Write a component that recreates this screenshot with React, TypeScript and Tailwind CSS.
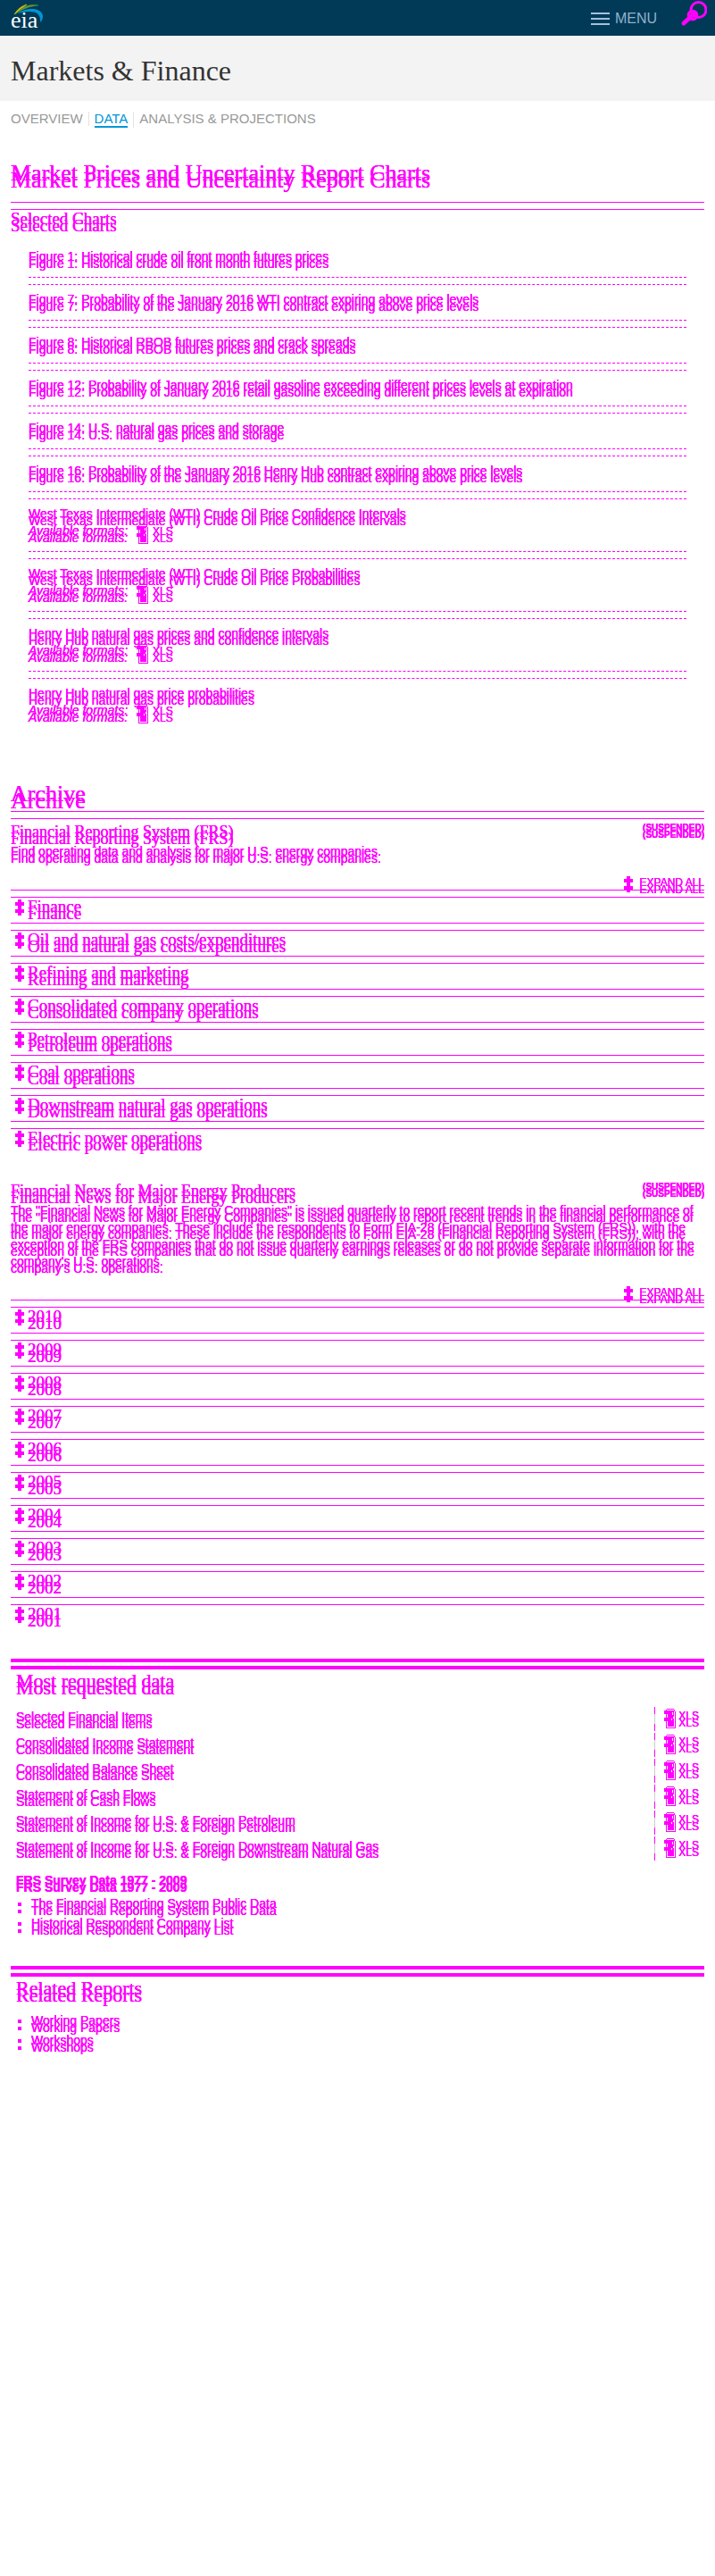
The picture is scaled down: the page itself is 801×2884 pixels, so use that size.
import React from "react";

const figures = [
  "Figure 1: Historical crude oil front month futures prices",
  "Figure 7: Probability of the January 2016 WTI contract expiring above price levels",
  "Figure 8: Historical RBOB futures prices and crack spreads",
  "Figure 12: Probability of January 2016 retail gasoline exceeding different prices levels at expiration",
  "Figure 14: U.S. natural gas prices and storage",
  "Figure 16: Probability of the January 2016 Henry Hub contract expiring above price levels",
];

const downloads = [
  "West Texas Intermediate (WTI) Crude Oil Price Confidence Intervals",
  "West Texas Intermediate (WTI) Crude Oil Price Probabilities",
  "Henry Hub natural gas prices and confidence intervals",
  "Henry Hub natural gas price probabilities",
];

const operations = [
  "Finance",
  "Oil and natural gas costs/expenditures",
  "Refining and marketing",
  "Consolidated company operations",
  "Petroleum operations",
  "Coal operations",
  "Downstream natural gas operations",
  "Electric power operations",
];

const years = ["2010", "2009", "2008", "2007", "2006", "2005", "2004", "2003", "2002", "2001"];

const requested = [
  "Selected Financial Items",
  "Consolidated Income Statement",
  "Consolidated Balance Sheet",
  "Statement of Cash Flows",
  "Statement of Income for U.S. & Foreign Petroleum",
  "Statement of Income for U.S. & Foreign Downstream Natural Gas",
];

function Logo() {
  return (
    <svg width="40" height="39" viewBox="0 0 40 39" aria-label="eia" role="img" className="overflow-visible">
      <path d="M4 15C8 9 12 6 18 4C13 8 9 11 4 15Z" fill="#ffc702" stroke="#ffc702" strokeWidth="0.5" />
      <path d="M5 15C12 6 21 3 31 5C21 6 13 9 5 15Z" fill="#5d9732" stroke="#5d9732" strokeWidth="0.5" />
      <path d="M8 14C17 7 35 7 36 17C36 20 35 22 33 24C34 14 28 9 8 14Z" fill="#0096d7" />
      <text x="0" y="30" fontSize="26" fill="#fff" fontFamily="Liberation Serif, serif">
        eia
      </text>
    </svg>
  );
}

function SearchIcon() {
  return (
    <svg width="30" height="30" viewBox="0 0 30 30" fill="none" stroke="#f0f" aria-hidden="true">
      <circle cx="20.5" cy="11" r="8.5" strokeWidth="3" />
      <circle cx="14" cy="17" r="4.8" strokeWidth="3" />
      <path d="M15 16L4 26" strokeWidth="5" strokeLinecap="round" />
    </svg>
  );
}

function Plus() {
  return (
    <svg width="10" height="18" viewBox="0 0 10 18" fill="currentColor" shapeRendering="crispEdges" aria-hidden="true" className="shrink-0">
      <path d="M3 0h4v3h3v4H7v4h3v4H7v3H3v-3H0v-4h3V7H0V3h3z" />
    </svg>
  );
}

function FileIcon() {
  return (
    <svg width="13" height="22" viewBox="0 0 13 22" fill="currentColor" shapeRendering="crispEdges" aria-hidden="true" className="shrink-0">
      <path d="M3 0h8v1H3zM2 1h1v21H2zM11 1h1v2h1v19h-1V3h-1zM2 21h11v1H2zM4 2h7v18H4zM0 2h9v4H0zM0 10h9v4H0z" />
      <path d="M9 4h1v3H9zM8 11h1v2H8zM10 9h1v2h-1z" fill="#fff" />
    </svg>
  );
}

function Rule() {
  return <div className="h-[9px] border-y border-[#f0f]" />;
}

function ThickRule() {
  return <div className="h-3 border-y-4 border-[#f0f]" />;
}

function PartHeading({ title }: { title: string }) {
  return (
    <div className="flex items-start justify-between">
      <h3 className="font-['Liberation_Serif',serif] text-[18px] leading-5">{title}</h3>
      <span className="text-[10px] leading-3 font-bold">(SUSPENDED)</span>
    </div>
  );
}

function Accordion({ items }: { items: string[] }) {
  return (
    <>
      <div className="mt-[17px] -mb-2 flex justify-end">
        <button type="button" className="flex items-start gap-2 text-[12px] leading-4 [text-shadow:inherit]">
          <span className="-mt-[7px]">
            <Plus />
          </span>
          EXPAND ALL
        </button>
      </div>
      <ul>
        {items.map((item) => (
          <li key={item}>
            <Rule />
            <button
              type="button"
              className="flex w-full items-start gap-1 pt-[7px] pl-[5px] text-left font-['Liberation_Serif',serif] text-[19px] leading-[21px] [text-shadow:inherit]"
            >
              <span className="-mt-[5px] flex">
                <Plus />
              </span>
              {item}
            </button>
          </li>
        ))}
      </ul>
    </>
  );
}

function Bullets({ items }: { items: string[] }) {
  return (
    <ul className="pl-2">
      {items.map((item) => (
        <li key={item} className="flex items-start gap-[11px] leading-[22px]">
          <span className="mt-[2px] h-3 w-1 border-y-4 border-[#f0f]" />
          <a href="#">{item}</a>
        </li>
      ))}
    </ul>
  );
}

export default function App() {
  return (
    <div className="min-h-screen bg-white font-['Liberation_Sans',Arial,sans-serif] text-[14px] leading-[19px] text-[#333]">
      <header className="flex h-10 items-start justify-between bg-[#003a57] pl-3 pr-[9px]">
        <a href="#" aria-label="eia home" className="mt-px">
          <Logo />
        </a>
        <div className="flex items-start">
          <button type="button" className="mt-3 mr-[26px] flex items-start gap-[6px] text-[16px] leading-[18px] text-[#93b1cc]">
            <span className="mt-[2px] flex w-[21px] flex-col gap-1">
              <span className="h-[2px] bg-[#a3c1e0]" />
              <span className="h-[2px] bg-[#a3c1e0]" />
              <span className="h-[2px] bg-[#a3c1e0]" />
            </span>
            MENU
          </button>
          <button type="button" aria-label="Search">
            <SearchIcon />
          </button>
        </div>
      </header>

      <div className="flex h-[73px] bg-[#f3f3f3] px-3 pt-[21px]">
        <h1 className="font-['Liberation_Serif',serif] text-[32px] leading-9">Markets &amp; Finance</h1>
      </div>

      <nav className="px-3 pt-3">
        <ul className="flex items-start text-[15px] leading-4 text-[#999]">
          <li className="border-r border-[#e3e3e3] pr-[6px]">
            <a href="#">OVERVIEW</a>
          </li>
          <li className="border-r border-[#e3e3e3] px-[6px]">
            <a href="#" className="block border-b-2 border-[#0096d7] text-[#0096d7]">
              DATA
            </a>
          </li>
          <li className="pl-[6px]">
            <a href="#">ANALYSIS &amp; PROJECTIONS</a>
          </li>
        </ul>
      </nav>

      <main className="px-3 pt-[47px] text-[#f0f] [text-shadow:0_0_0_#f0f,0_0_0_#f0f,0_-8px_0_#f0f,0_-8px_0_#f0f,0_-8px_0_#f0f]">
        <h2 className="mb-3 font-['Liberation_Serif',serif] text-[26px] leading-6">
          Market Prices and Uncertainty Report Charts
        </h2>
        <Rule />
        <h3 className="my-[6px] font-['Liberation_Serif',serif] text-[19px] leading-6">Selected Charts</h3>
        <ul className="px-5">
          {figures.map((title) => (
            <li key={title}>
              <div className="pt-[15px] pb-[5px]">
                <a href="#">{title}</a>
              </div>
              <div className="h-[9px] border-y border-dashed border-[#f0f]" />
            </li>
          ))}
          {downloads.map((title, i) => (
            <li key={title}>
              <div className="pt-[15px] pb-[5px]">
                <a href="#" className="block">
                  {title}
                </a>
                <div className="flex h-[19px] items-start">
                  <em>Available formats:</em>
                  <a href="#" className="ml-[10px] flex items-start gap-[5px] text-[12px] leading-[21px]">
                    <span className="-mt-[6px]">
                      <FileIcon />
                    </span>
                    XLS
                  </a>
                </div>
              </div>
              {i < downloads.length - 1 && <div className="h-[9px] border-y border-dashed border-[#f0f]" />}
            </li>
          ))}
        </ul>

        <h2 className="mt-[68px] font-['Liberation_Serif',serif] text-[26px] leading-[22px]">Archive</h2>
        <Rule />
        <section className="mt-3">
          <PartHeading title="Financial Reporting System (FRS)" />
          <p className="mt-[3px]">Find operating data and analysis for major U.S. energy companies.</p>
          <Accordion items={operations} />
        </section>

        <section className="mt-[39px]">
          <PartHeading title="Financial News for Major Energy Producers" />
          <p className="mt-[3px]">
            The "Financial News for Major Energy Companies" is issued quarterly to report recent trends in the financial
            performance of the major energy companies. These include the respondents to Form EIA-28 (Financial Reporting
            System (FRS)), with the exception of the FRS companies that do not issue quarterly earnings releases or do not
            provide separate information for the company's U.S. operations.
          </p>
          <Accordion items={years} />
        </section>

        <section className="mt-8">
          <ThickRule />
          <div className="px-[6px] pt-[9px]">
            <h2 className="font-['Liberation_Serif',serif] text-[22px] leading-6">Most requested data</h2>
            <ul className="mt-[9px]">
              {requested.map((title) => (
                <li key={title} className="flex h-[29px] items-start justify-between">
                  <a href="#" className="pt-[10px]">
                    {title}
                  </a>
                  <div className="flex items-start">
                    <span className="flex h-[27px] w-px flex-col justify-between bg-[#ccc]">
                      <span className="h-2 bg-[#f0f]" />
                      <span className="h-2 bg-[#f0f]" />
                    </span>
                    <a href="#" className="flex items-start gap-[3px] pt-[2px] pl-[10px] text-[12px]">
                      <FileIcon />
                      <span className="pt-[7px]">XLS</span>
                    </a>
                  </div>
                </li>
              ))}
            </ul>
            <h4 className="mt-[19px] mb-[5px] font-bold">FRS Survey Data 1977 - 2009</h4>
          </div>
          <Bullets items={["The Financial Reporting System Public Data", "Historical Respondent Company List"]} />
        </section>

        <section className="mt-[29px]">
          <ThickRule />
          <div className="px-[6px] pt-[9px] pb-[13px]">
            <h2 className="font-['Liberation_Serif',serif] text-[22px] leading-6">Related Reports</h2>
          </div>
          <Bullets items={["Working Papers", "Workshops"]} />
        </section>
      </main>
    </div>
  );
}
